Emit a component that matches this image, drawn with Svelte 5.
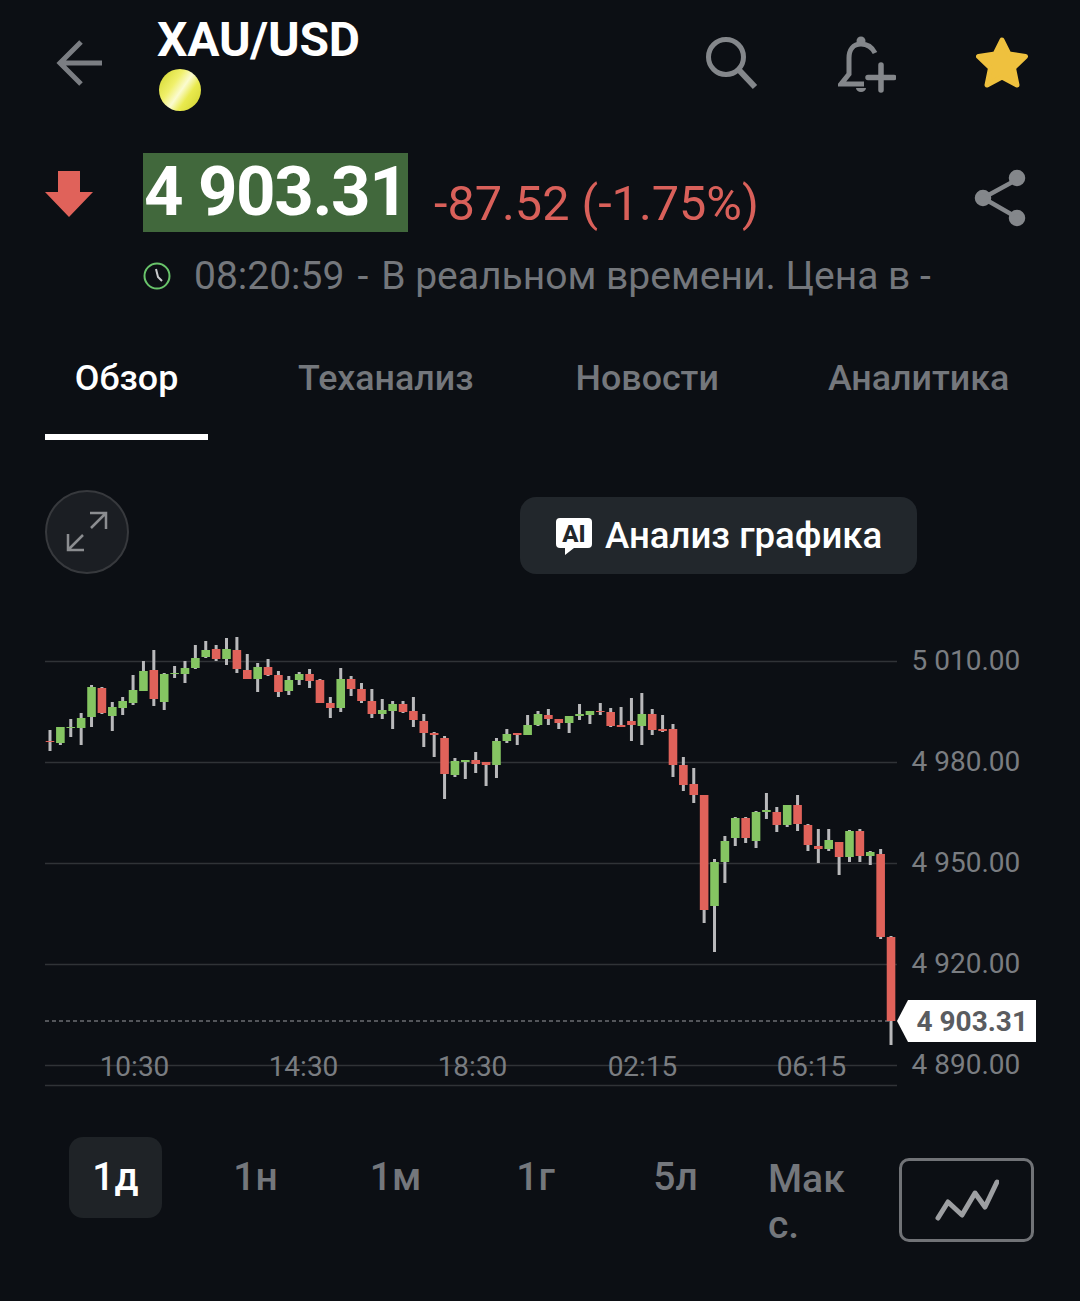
<script>
	// [wickTop, wickBottom, bodyTop, bodyBottom, up]
	const candles = [
		[730, 751, 741, 742, 0], [727, 745, 727, 743, 1], [719, 737, 727, 728, 1], [713, 745, 718, 728, 1],
		[685, 727, 687, 717, 1], [687, 714, 688, 713, 0], [702, 731, 707, 716, 1], [697, 715, 701, 708, 1],
		[675, 705, 690, 703, 1], [661, 691, 671, 691, 1], [650, 706, 670, 699, 0], [673, 710, 674, 702, 1],
		[666, 678, 673, 674, 1], [661, 683, 668, 674, 1], [645, 669, 658, 668, 1], [641, 658, 650, 657, 1],
		[645, 661, 649, 659, 0], [638, 665, 649, 659, 1], [637, 673, 650, 669, 0], [654, 679, 670, 679, 0],
		[663, 692, 667, 679, 1], [659, 676, 667, 675, 0], [671, 697, 675, 692, 0], [676, 695, 680, 691, 1],
		[672, 685, 674, 680, 1], [669, 688, 674, 681, 0], [679, 703, 680, 703, 0], [697, 718, 703, 708, 0],
		[668, 712, 679, 708, 1], [676, 696, 679, 689, 0], [683, 703, 689, 701, 0], [689, 718, 701, 714, 0],
		[699, 719, 710, 714, 1], [701, 729, 704, 711, 1], [701, 713, 704, 712, 0], [697, 727, 711, 720, 0],
		[714, 747, 721, 733, 0], [732, 757, 733, 735, 0], [736, 799, 738, 774, 0], [758, 777, 761, 775, 1],
		[760, 779, 760, 762, 1], [752, 773, 760, 764, 0], [762, 786, 762, 765, 0], [738, 778, 741, 765, 1],
		[729, 743, 734, 741, 1], [733, 745, 733, 735, 0], [715, 735, 725, 735, 1], [711, 726, 714, 725, 1],
		[709, 725, 715, 719, 0], [719, 729, 719, 723, 0], [716, 733, 716, 723, 1], [704, 720, 714, 716, 1],
		[711, 724, 711, 715, 1], [703, 715, 711, 712, 0], [708, 727, 712, 726, 0], [707, 727, 725, 727, 0],
		[698, 741, 721, 725, 0], [693, 745, 714, 726, 1], [709, 735, 714, 730, 0], [715, 732, 729, 731, 0],
		[724, 777, 729, 765, 0], [757, 791, 765, 785, 0], [768, 803, 784, 795, 0], [795, 923, 795, 910, 0],
		[859, 952, 862, 906, 1], [836, 883, 841, 862, 1], [817, 846, 818, 838, 1], [817, 843, 818, 838, 0],
		[811, 848, 812, 841, 1], [793, 819, 810, 812, 1], [807, 832, 812, 825, 0], [805, 827, 805, 825, 1],
		[795, 831, 805, 824, 0], [824, 851, 825, 845, 0], [829, 863, 846, 849, 0], [829, 851, 840, 849, 1],
		[842, 875, 842, 857, 0], [830, 862, 831, 857, 1], [829, 862, 831, 856, 0], [851, 865, 852, 856, 1],
		[849, 939, 854, 937, 0], [936, 1045, 937, 1021, 0]
	];

	const gridLines = [
		{ y: 661.5, label: '5 010.00' },
		{ y: 762.5, label: '4 980.00' },
		{ y: 863.5, label: '4 950.00' },
		{ y: 964.5, label: '4 920.00' },
		{ y: 1065.5, label: '4 890.00' }
	];

	const times = [
		{ x: 134.5, label: '10:30' },
		{ x: 303.5, label: '14:30' },
		{ x: 472.5, label: '18:30' },
		{ x: 642.5, label: '02:15' },
		{ x: 811.5, label: '06:15' }
	];

	const tabs = ['Обзор', 'Теханализ', 'Новости', 'Аналитика'];
	const ranges = ['1д', '1н', '1м', '1г', '5л'];

	const top = 630;
	const candleX = (i) => 50 + i * 10.383;
</script>

<div class="page">
	<header class="header">
		<svg class="back" width="50" height="50" viewBox="0 0 50 50" fill="none" stroke="#7b7e83" stroke-width="5">
			<path d="M49 24H8M28 3 7 24l21 21" />
		</svg>
		<div class="title">
			<div class="symbol">XAU/USD</div>
			<div class="coin"></div>
		</div>
		<div class="actions">
			<svg width="52" height="58" viewBox="0 0 52 58" fill="none" stroke="#84878b" stroke-width="5">
				<circle cx="20" cy="23" r="17.500" />
				<path d="M33 36 49 53" stroke-width="6" />
			</svg>
			<svg width="58" height="62" viewBox="0 0 58 62" fill="none" stroke="#84878b" stroke-width="5">
				<path d="M37 19C34 13 29 10 23 10 15 10 11 16 11 24V40L3 50H26" />
				<circle cx="23" cy="7" r="4.500" fill="#84878b" stroke="none" />
				<path d="M18 54H28A5 4 0 0 1 18 54Z" fill="#84878b" stroke="none" />
				<path d="M43 31V56M30 43.500H56" stroke-width="5.500" stroke-linecap="round" />
			</svg>
			<svg width="54" height="52" viewBox="0 0 54 52" fill="#efc13e" stroke="#efc13e" stroke-width="5" stroke-linejoin="round">
				<path d="M26 3 33 17 49.500 19.500 37.500 31 41 48 26 40 11 48 14.500 31 2.500 19.500 19 17Z" />
			</svg>
		</div>
	</header>

	<section class="quote">
		<svg class="down" width="48" height="46" viewBox="0 0 48 46" fill="#e0625a">
			<path d="M13 0H35V21H48L24 46 0 21H13Z" />
		</svg>
		<div class="price">4 903.31</div>
		<div class="change">-87.52 (-1.75%)</div>
		<svg class="share" width="54" height="58" viewBox="0 0 54 58" fill="#84878b" stroke="#84878b" stroke-width="4.500">
			<path d="M44 10 9 29l35 20" fill="none" />
			<circle cx="43" cy="9" r="6" />
			<circle cx="9" cy="29" r="6" />
			<circle cx="43" cy="49" r="6" />
		</svg>
	</section>

	<div class="status">
		<svg width="28" height="28" viewBox="0 0 28 28" fill="none">
			<circle cx="14" cy="14" r="12.500" stroke="#69c46b" stroke-width="2" />
			<path d="M13 7 15 15 19 19" stroke="#c9cbcd" stroke-width="2" />
		</svg>
		<span>08:20:59<span class="dash">-</span>В реальном времени. Цена в -</span>
	</div>

	<nav class="tabs">
		{#each tabs as tab, i}
			<div class="tab" class:active={i === 0}>{tab}</div>
		{/each}
	</nav>

	<div class="tools">
		<button class="expand" aria-label="Развернуть">
			<svg width="44" height="44" viewBox="0 0 44 44" fill="none" stroke="#8b8d90" stroke-width="2.500">
				<path d="M25 3H41V19M41 3 26 18M3 24V40H19M3 40 18 25" />
			</svg>
		</button>
		<button class="ai">
			<svg width="38" height="38" viewBox="0 0 38 38">
				<path d="M5 1H33Q37 1 37 5V27Q37 31 33 31H19L10 38V31H5Q1 31 1 27V5Q1 1 5 1Z" fill="#fff" />
				<text x="19" y="25" text-anchor="middle" class="ai-mark">AI</text>
			</svg>
			<span>Анализ графика</span>
		</button>
	</div>

	<svg class="chart" width="1080" height="480" viewBox="0 {top} 1080 480">
		{#each gridLines as g}
			<line x1="45" x2="897" y1={g.y} y2={g.y} stroke="#303337" stroke-width="1.500" />
			<text class="axis" x="911.5" y={g.y + 8}>{g.label}</text>
		{/each}
		<line x1="45" x2="897" y1="1085.5" y2="1085.5" stroke="#303337" stroke-width="1.500" />
		<line x1="45" x2="890" y1="1021" y2="1021" stroke="#6b6e72" stroke-width="1.500" stroke-dasharray="4 3" />

		{#each times as t}
			<text class="axis" x={t.x} y="1076" text-anchor="middle">{t.label}</text>
		{/each}

		{#each candles as [wt, wb, bt, bb, up], i}
			<rect x={candleX(i) - 1.5} y={wt} width="3" height={wb - wt} fill="#b9b9bb" />
			<rect x={candleX(i) - 4.3} y={bt} width="8.6" height={bb - bt} fill={up ? '#85c562' : '#e0625a'} />
		{/each}

		<path d="M897 1021 908 1000H1036V1042H908Z" fill="#fff" />
		<text class="last" x="1028" y="1031" text-anchor="end">4 903.31</text>
	</svg>

	<div class="ranges">
		{#each ranges as r, i}
			<div class="range" class:selected={i === 0}>{r}</div>
		{/each}
		<div class="range max">Макс.</div>
		<button class="mode" aria-label="Тип графика">
			<svg width="64" height="42" viewBox="0 0 64 42" fill="none" stroke="#9d9fa2" stroke-width="5" stroke-linecap="round" stroke-linejoin="round">
				<path d="M3 39 13 23 27 36 40 14 50 28 62 3" />
			</svg>
		</button>
	</div>
</div>

<style>
	:global(body) {
		margin: 0;
		background: #0c0f14;
	}

	.page {
		width: 1080px;
		height: 1301px;
		overflow: hidden;
		background: #0c0f14;
		font-family: Roboto, sans-serif;
		color: #84878b;
	}

	.header {
		display: flex;
		align-items: flex-start;
		height: 153px;
		padding: 0 50px 0 53px;
		box-sizing: border-box;
	}

	.back {
		margin-top: 39px;
	}

	.title {
		margin-left: 54px;
		margin-top: 14px;
	}

	.symbol {
		font-size: 48px;
		font-weight: 700;
		line-height: 52px;
		color: #fff;
		letter-spacing: -0.2px;
	}

	.coin {
		width: 42px;
		height: 42px;
		margin-top: 3px;
		margin-left: 2px;
		border-radius: 50%;
		background: linear-gradient(125deg, #d9dc3a 10%, #f0f06a 35%, #fbfbd0 52%, #e9ea4e 68%, #cfd02e 100%);
	}

	.actions {
		display: flex;
		align-items: flex-start;
		margin-left: auto;
		padding-top: 34px;
	}

	.actions svg:nth-child(2) {
		margin-left: 80px;
	}

	.actions svg:nth-child(3) {
		margin-left: 80px;
		margin-top: 3px;
	}

	.quote {
		display: flex;
		align-items: flex-start;
		height: 88px;
		padding-left: 45px;
	}

	.down {
		margin-top: 18px;
		flex: none;
	}

	.price {
		margin-left: 50px;
		width: 265px;
		height: 79px;
		padding-left: 1px;
		box-sizing: border-box;
		background: #41683c;
		color: #fff;
		font-size: 69px;
		font-weight: 700;
		line-height: 77px;
		letter-spacing: -1.4px;
		white-space: nowrap;
	}

	.change {
		margin-left: 26px;
		margin-top: 22px;
		font-size: 48.6px;
		line-height: 58px;
		color: #d9605a;
	}

	.share {
		margin-left: auto;
		margin-right: 52px;
		margin-top: 16px;
	}

	.status {
		display: flex;
		align-items: center;
		height: 70px;
		padding-left: 143px;
		font-size: 39px;
		color: #74777c;
	}

	.status > span {
		margin-left: 23px;
	}

	.dash {
		margin: 0 13px;
	}

	.tabs {
		display: flex;
		height: 103px;
		margin-top: 26px;
		padding-left: 45px;
		font-size: 35.8px;
		font-weight: 500;
		color: #74777c;
	}

	.tab {
		line-height: 60px;
		padding-top: 11px;
	}

	.tab:nth-child(1) {
		width: 163px;
		text-align: center;
	}

	.tab:nth-child(2) {
		margin-left: 90px;
	}

	.tab:nth-child(3) {
		margin-left: 102px;
	}

	.tab:nth-child(4) {
		margin-left: 109px;
	}

	.active {
		color: #fff;
		border-bottom: 6px solid #fff;
		height: 86px;
	}

	.tools {
		display: flex;
		align-items: flex-start;
		height: 140px;
		margin-top: 50px;
		padding-left: 45px;
	}

	button {
		font: inherit;
		padding: 0;
		cursor: pointer;
	}

	.expand {
		display: flex;
		align-items: center;
		justify-content: center;
		width: 84px;
		height: 84px;
		border-radius: 50%;
		background: #1b1e23;
		border: 2px solid #37393d;
		box-sizing: border-box;
	}

	.ai {
		display: flex;
		align-items: center;
		gap: 12px;
		width: 397px;
		height: 77px;
		margin-left: 391px;
		margin-top: 7px;
		padding-left: 35px;
		box-sizing: border-box;
		border: none;
		border-radius: 16px;
		background: #22272c;
		color: #fff;
		font-size: 36.6px;
		font-weight: 500;
	}

	.ai-mark {
		font-size: 24px;
		font-weight: 800;
		fill: #22272c;
		font-family: Roboto, sans-serif;
	}

	.chart {
		display: block;
	}

	.axis {
		font-family: Roboto, sans-serif;
		font-size: 28px;
		fill: #7a7d81;
	}

	.last {
		font-family: Roboto, sans-serif;
		font-size: 28px;
		font-weight: 700;
		fill: #5a5c60;
	}

	.ranges {
		display: flex;
		align-items: flex-start;
		margin-top: 27px;
		padding-left: 69px;
		font-size: 39px;
		font-weight: 500;
		color: #74777c;
	}

	.range {
		width: 93px;
		height: 81px;
		line-height: 81px;
		text-align: center;
		margin-right: 47px;
		border-radius: 14px;
	}

	.selected {
		background: #1f2327;
		color: #fff;
	}

	.max {
		width: 84px;
		height: auto;
		margin-right: 0;
		margin-left: -1px;
		padding-top: 19px;
		line-height: 46px;
		text-align: left;
		word-break: break-all;
	}

	.mode {
		display: flex;
		align-items: center;
		justify-content: center;
		flex: none;
		width: 135px;
		height: 84px;
		margin-left: 47px;
		margin-top: 21px;
		box-sizing: border-box;
		background: transparent;
		border: 3px solid #717377;
		border-radius: 10px;
	}
</style>
